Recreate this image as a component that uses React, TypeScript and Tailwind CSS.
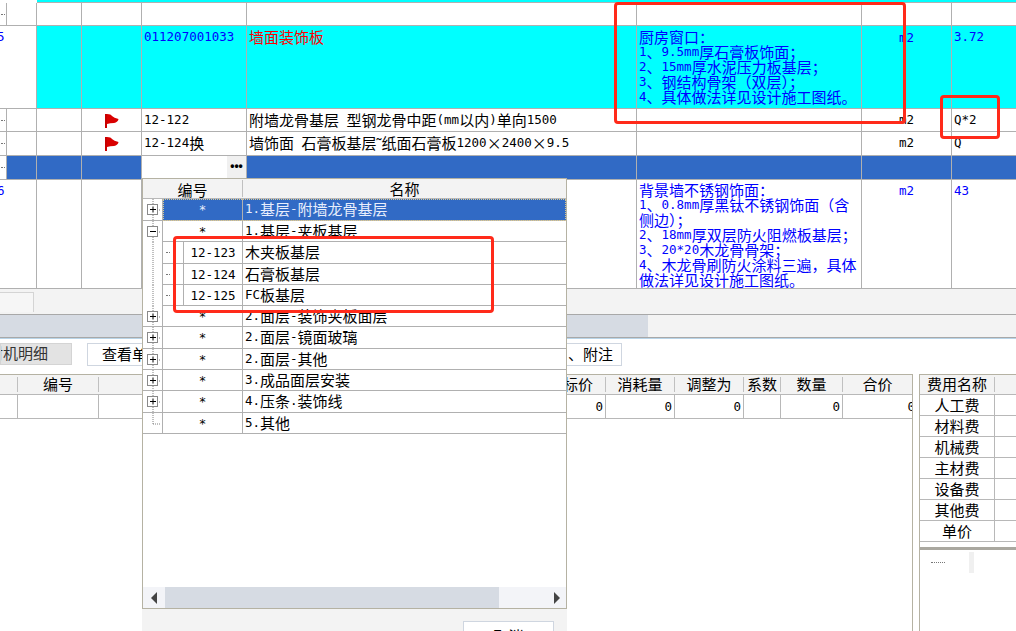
import React from "react";

const MONO = "font-['DejaVu_Sans_Mono'] text-[12.5px]";

// Mixed CJK / Latin text: Latin runs are half the width of the CJK glyphs, as in the bitmap UI font.
function T({ s }: { s: string }) {
  const parts = s.split(/([\x00-\x7f]+)/).filter(Boolean);
  return (
    <>
      {parts.map((p, i) =>
        /^[\x00-\x7f]/.test(p) ? (
          <span key={i} className={`${MONO} relative -top-[2px] whitespace-pre`}>
            {p}
          </span>
        ) : (
          <span key={i}>{p}</span>
        )
      )}
    </>
  );
}

function Line({ s }: { s: string }) {
  return (
    <p className="h-[15px] leading-[15px] whitespace-nowrap">
      <T s={s} />
    </p>
  );
}

const MAIN_COLS = "grid grid-cols-[7px_30px_45px_60px_105px_390px_225px_90px_64px]";

function Flag() {
  return (
    <svg width="16" height="15" viewBox="0 0 16 15" className="mx-auto mt-[5px]">
      <path d="M1 0 L3 0 L3 14 L1 14 Z" fill="#c80000" />
      <path d="M3 0 Q7 0 8 2 Q10 4 14.5 5 Q14 8 10 9 Q6 9 3 10 Z" fill="#d90000" />
    </svg>
  );
}

function Dots() {
  return <span className="block ml-[1px] mt-[11px] w-[4px] border-t border-dotted border-[#777]" />;
}

const cell = "border-r border-b border-[#b0b0b0] overflow-hidden";
const rowText = "px-[2px] pt-[1px] text-[15px] leading-[20px] whitespace-nowrap";

function ItemRow({ code, name, unit, qty }: { code: string; name: string; unit: string; qty: string }) {
  return (
    <div className={`${MAIN_COLS} h-full text-black`}>
      <div className={cell}>
        <Dots />
      </div>
      <div className={cell} />
      <div className={cell} />
      <div className={cell}>
        <Flag />
      </div>
      <div className={`${cell} ${rowText}`}>
        <T s={code} />
      </div>
      <div className={`${cell} ${rowText}`}>
        <T s={name} />
      </div>
      <div className={cell} />
      <div className={`${cell} text-center pt-[1px] ${MONO} leading-[20px]`}>{unit}</div>
      <div className={`border-b border-[#b0b0b0] px-[2px] pt-[1px] ${MONO} leading-[20px]`}>{qty}</div>
    </div>
  );
}

function MainGrid() {
  return (
    <div className="h-[289px] text-[15px]">
      <div className={`${MAIN_COLS} h-[3px]`}>
        <div className="col-span-2" />
        <div className="col-span-7 bg-[#00ffff] border-b border-[#b0b0b0]" />
      </div>
      <div className={`${MAIN_COLS} h-[23px]`}>
        <div className={cell}>
          <Dots />
        </div>
        <div className={cell} />
        <div className={cell} />
        <div className={cell} />
        <div className={cell} />
        <div className={cell} />
        <div className={cell} />
        <div className={cell} />
        <div className="border-b border-[#b0b0b0]" />
      </div>
      <div className={`${MAIN_COLS} h-[83px]`}>
        <div className={`${cell} col-span-2`}>
          <span className={`block -ml-[3px] mt-[1px] ${MONO} leading-[20px] text-[#0000ff]`}>5</span>
        </div>
        <div className={`${cell} bg-[#00ffff]`} />
        <div className={`${cell} bg-[#00ffff]`} />
        <div className={`${cell} bg-[#00ffff] px-[2px] pt-[1px] text-[#0000ff] ${MONO} leading-[20px]`}>011207001033</div>
        <div className={`${cell} bg-[#00ffff] ${rowText} text-[#ff0000]`}>墙面装饰板</div>
        <div className={`${cell} bg-[#00ffff] px-[2px] pt-[3px] text-[#0000ff]`}>
          <Line s="厨房窗口：" />
          <Line s="1、9.5mm厚石膏板饰面；" />
          <Line s="2、15mm厚水泥压力板基层；" />
          <Line s="3、钢结构骨架（双层）；" />
          <Line s="4、具体做法详见设计施工图纸。" />
        </div>
        <div className={`${cell} bg-[#00ffff] text-center pt-[2px] text-[#0000ff] ${MONO} leading-[20px]`}>m2</div>
        <div className={`border-b border-[#b0b0b0] bg-[#00ffff] px-[2px] pt-[1px] text-[#0000ff] ${MONO} leading-[20px]`}>3.72</div>
      </div>
      <div className="h-[23px]">
        <ItemRow code="12-122" name="附墙龙骨基层 型钢龙骨中距(mm以内)单向1500" unit="m2" qty="Q*2" />
      </div>
      <div className="h-[24px]">
        <ItemRow code="12-124换" name="墙饰面 石膏板基层˜纸面石膏板1200×2400×9.5" unit="m2" qty="Q" />
      </div>
      <div className={`${MAIN_COLS} h-[24px]`}>
        <div className={`${cell} bg-white`}>
          <Dots />
        </div>
        <div className={`${cell} bg-[#316ac5]`} />
        <div className={`${cell} bg-[#316ac5]`} />
        <div className={`${cell} bg-[#316ac5]`} />
        <div className={`${cell} bg-white flex justify-end`}>
          <span className="flex w-[19px] h-[22px] items-center justify-center bg-[#f0f0f0] text-[12px] font-bold leading-none font-['Liberation_Sans'] pb-[2px]">•••</span>
        </div>
        <div className={`${cell} bg-[#316ac5]`} />
        <div className={`${cell} bg-[#316ac5]`} />
        <div className={`${cell} bg-[#316ac5]`} />
        <div className="border-b border-[#b0b0b0] bg-[#316ac5]" />
      </div>
      <div className={`${MAIN_COLS} h-[109px]`}>
        <div className={`${cell} col-span-2`}>
          <span className={`block -ml-[3px] mt-[1px] ${MONO} leading-[20px] text-[#0000ff]`}>6</span>
        </div>
        <div className={cell} />
        <div className={cell} />
        <div className={cell} />
        <div className={cell} />
        <div className={`${cell} px-[2px] pt-[2px] text-[#0000ff]`}>
          <Line s="背景墙不锈钢饰面：" />
          <Line s="1、0.8mm厚黑钛不锈钢饰面（含" />
          <Line s="侧边）；" />
          <Line s="2、18mm厚双层防火阻燃板基层；" />
          <Line s="3、20*20木龙骨骨架；" />
          <Line s="4、木龙骨刷防火涂料三遍，具体" />
          <Line s="做法详见设计施工图纸。" />
        </div>
        <div className={`${cell} text-center pt-[1px] text-[#0000ff] ${MONO} leading-[20px]`}>m2</div>
        <div className={`border-b border-[#b0b0b0] px-[2px] pt-[1px] text-[#0000ff] ${MONO} leading-[20px]`}>43</div>
      </div>
    </div>
  );
}

function BandsAndTabs() {
  return (
    <>
      <div className="h-[26px] bg-[#f3f3f3] border-b border-[#a8a8a8] pt-[3px]">
        <div className="w-[34px] h-[20px] border-t border-r border-[#d4d4d4] bg-[#f6f6f6]" />
      </div>
      <div className="h-[23px] flex border-b border-[#a8a8a8] bg-[#f3f3f3]">
        <div className="w-[648px] bg-[#d6dbe3]" />
      </div>
      <div className="h-[1px] bg-[#b8d4e8]" />
    </>
  );
}

function ButtonRow() {
  return (
    <div className="h-[35px] flex items-start pt-[4px] text-[15px]">
      <div className="w-[72px] h-[22px] bg-[#e3e3e3] border border-[#d4d4d4] overflow-hidden pr-[23px] leading-[18px] text-[#333] whitespace-nowrap flex justify-end">
        材机明细
      </div>
      <div className="ml-[15px] w-[535px] h-[23px] bg-white border border-[#cfd6e0] flex justify-between px-[14px] leading-[19px] pr-[8px]">
        <span>查看单价</span>
        <span>、附注</span>
      </div>
    </div>
  );
}

const DETAIL_COLS = "grid grid-cols-[18px_81px_507px_69px_69px_37px_62px_69px]";

function DetailTable() {
  const head = "my-[2px] border-r border-[#c0c0c0] text-center leading-[14px] overflow-hidden";
  const data = `border-r border-[#b8b8b8] text-right pt-[2px] ${MONO} leading-[20px]`;
  return (
    <div className="w-[913px] h-[258px] border-t border-r border-[#b5b2a3] overflow-hidden">
      <div className={`${DETAIL_COLS} h-[20px] bg-[#f3f3f3] border-b border-[#b8b8b8]`}>
        <div className={head} />
        <div className={head}>编号</div>
        <div className={`${head} text-right pr-[12px]`}>标价</div>
        <div className={head}>消耗量</div>
        <div className={head}>调整为</div>
        <div className={head}>系数</div>
        <div className={head}>数量</div>
        <div className="my-[2px] text-center leading-[14px]">合价</div>
      </div>
      <div className={`${DETAIL_COLS} h-[24px] border-b border-[#b8b8b8]`}>
        <div className={data} />
        <div className={data} />
        <div className={`${data} pr-[2px]`}>0</div>
        <div className={`${data} pr-[2px]`}>0</div>
        <div className={`${data} pr-[2px]`}>0</div>
        <div className={data} />
        <div className={`${data} pr-[2px]`}>0</div>
        <div className={`flex justify-end overflow-hidden pt-[2px] ${MONO} leading-[20px] -mr-[1px]`}>
          <span className="-mr-[2px]">0</span>
        </div>
      </div>
    </div>
  );
}

function CostPanel() {
  const names = ["人工费", "材料费", "机械费", "主材费", "设备费", "其他费", "单价"];
  return (
    <div className="flex-1 h-[258px] ml-[6px] border-l border-t border-[#b5b2a3] overflow-hidden">
      <div className="grid grid-cols-[75px_1fr] h-[20px] bg-[#f3f3f3] border-b border-[#b8b8b8]">
        <div className="my-[2px] border-r border-[#c0c0c0] text-center leading-[14px]">费用名称</div>
        <div />
      </div>
      {names.map((n) => (
        <div key={n} className="grid grid-cols-[75px_1fr] h-[21px] border-b border-[#b8b8b8]">
          <div className="border-r border-[#b8b8b8] text-center leading-[20px]">{n}</div>
          <div />
        </div>
      ))}
      <div className="mt-[5px] h-[3px] bg-[#aaa8a0]" />
      <div className="flex items-start">
        <span className="ml-[11px] mt-[12px] w-[14px] border-t border-dotted border-[#777]" />
        <span className="ml-[24px] mt-[2px] w-[5px] h-[21px] bg-[#f0f0f0]" />
      </div>
    </div>
  );
}

function Gutter({ kind }: { kind: "plus" | "minus" | "line" | "end" | "sub" }) {
  const boxed = kind === "plus" || kind === "minus";
  return (
    <svg width="19" height="22" viewBox="0 0 19 22" className="block">
      <line
        x1="10" x2="10" y1="0" y2={kind === "end" ? 11 : 22}
        stroke="#808080" strokeDasharray="1 1"
      />
      {(boxed || kind === "end") && <line x1="10" x2="18" y1="11" y2="11" stroke="#808080" strokeDasharray="1 1" />}
      {boxed && (
        <>
          <rect x="4.5" y="5.5" width="10" height="10" fill="white" stroke="#8a8a8a" />
          <line x1="7" x2="13" y1="10.5" y2="10.5" stroke="#000" />
          {kind === "plus" && <line x1="10" x2="10" y1="7.5" y2="13.5" stroke="#000" strokeWidth="1" />}
        </>
      )}
    </svg>
  );
}

type Row = { code: string; name: string; kind: "plus" | "minus" | "end" | "sub"; h: string; sel?: boolean };

const TREE: Row[] = [
  { code: "*", name: "1.基层-附墙龙骨基层", kind: "plus", h: "h-[22px]", sel: true },
  { code: "*", name: "1.基层-夹板基层", kind: "minus", h: "h-[21px]" },
  { code: "12-123", name: "木夹板基层", kind: "sub", h: "h-[22px]" },
  { code: "12-124", name: "石膏板基层", kind: "sub", h: "h-[21px]" },
  { code: "12-125", name: "FC板基层", kind: "sub", h: "h-[21px]" },
  { code: "*", name: "2.面层-装饰夹板面层", kind: "plus", h: "h-[21px]" },
  { code: "*", name: "2.面层-镜面玻璃", kind: "plus", h: "h-[22px]" },
  { code: "*", name: "2.面层-其他", kind: "plus", h: "h-[21px]" },
  { code: "*", name: "3.成品面层安装", kind: "plus", h: "h-[21px]" },
  { code: "*", name: "4.压条.装饰线", kind: "plus", h: "h-[22px]" },
  { code: "*", name: "5.其他", kind: "end", h: "h-[21px]" },
];

function TreeRow({ row }: { row: Row }) {
  const nested = row.kind === "sub" || row.kind === "minus";
  return (
    <div className={`flex ${row.h} overflow-hidden`}>
      <div className={`w-[20px] shrink-0 border-r border-[#b0b0b0] overflow-hidden ${nested ? "" : "border-b"}`}>
        <Gutter kind={row.kind === "sub" ? "line" : row.kind} />
      </div>
      {row.kind === "sub" ? (
        <>
          <div className="w-[21px] shrink-0 border-r border-b border-[#b0b0b0]">
            <span className="block mt-[10px] ml-[3px] w-[4px] border-t border-dotted border-[#777]" />
          </div>
          <div className={`w-[59px] shrink-0 border-r border-b border-[#b0b0b0] text-center ${MONO} leading-[21px]`}>{row.code}</div>
          <div className="flex-1 border-b border-[#b0b0b0] pl-[2px] leading-[19px] whitespace-nowrap"><T s={row.name} /></div>
        </>
      ) : (
        <div className={`flex flex-1 border-b ${row.sel ? "border-[#b0b0b0] bg-[#316ac5] text-[#e8eefc] outline-1 -outline-offset-1 outline-dotted outline-[#d8c890]" : "border-[#b0b0b0]"}`}>
          <div className={`w-[80px] shrink-0 border-r border-[#b0b0b0] text-center ${MONO} leading-[22px]`}>{row.code}</div>
          <div className="flex-1 pl-[2px] leading-[19px] whitespace-nowrap"><T s={row.name} /></div>
        </div>
      )}
    </div>
  );
}

function PickerDialog() {
  return (
    <div className="absolute left-[142px] top-[178px] w-[425px] h-[453px] bg-[#f3f3f3] text-[15px]">
      <div className="h-[431px] bg-white border border-[#b5b2a3] flex flex-col">
        <div className="flex h-[20px] shrink-0 bg-[#f3f3f3] border-b border-[#b8b8b8]">
          <div className="w-[100px] my-[1px] border-r border-[#c0c0c0] text-center leading-[20px]">编号</div>
          <div className="flex-1 text-center leading-[20px]">名称</div>
        </div>
        {TREE.map((r) => (
          <TreeRow key={r.code + r.name} row={r} />
        ))}
        <div className="flex-1" />
        <div className="h-[21px] shrink-0 flex items-center">
          <div className="w-[22px] h-full flex items-center justify-center bg-[#f3f4f8]">
            <svg width="8" height="12" viewBox="0 0 8 12"><path d="M7 0 L7 12 L1 6 Z" fill="#444" /></svg>
          </div>
          <div className="w-[334px] h-full bg-[#d6dbe3]" />
          <div className="flex-1 h-full flex items-center justify-end pr-[5px] bg-[#f3f4f8]">
            <svg width="8" height="12" viewBox="0 0 8 12"><path d="M1 0 L1 12 L7 6 Z" fill="#444" /></svg>
          </div>
        </div>
      </div>
      <div className="ml-[321px] mt-[12px] w-[91px] h-[20px] bg-white border border-[#cfd6e0] text-center leading-[27px]">取消</div>
    </div>
  );
}

export default function App() {
  return (
    <div className="relative w-[1016px] h-[631px] overflow-hidden bg-white text-black font-['Noto_Sans_CJK_SC',sans-serif]">
      <MainGrid />
      <BandsAndTabs />
      <ButtonRow />
      <div className="flex text-[15px]">
        <DetailTable />
        <CostPanel />
      </div>
      <PickerDialog />
      {/* Hand-drawn review marks on top of the grid */}
      <div className="absolute left-[614px] top-[2px] w-[292px] h-[122px] border-[3px] border-[#ff2a1a] rounded-[4px]" />
      <div className="absolute left-[940px] top-[95px] w-[60px] h-[44px] border-[3px] border-[#ff2a1a] rounded-[4px]" />
      <div className="absolute left-[173px] top-[236px] w-[321px] h-[77px] border-[3px] border-[#ff2a1a] rounded-[4px]" />
    </div>
  );
}
